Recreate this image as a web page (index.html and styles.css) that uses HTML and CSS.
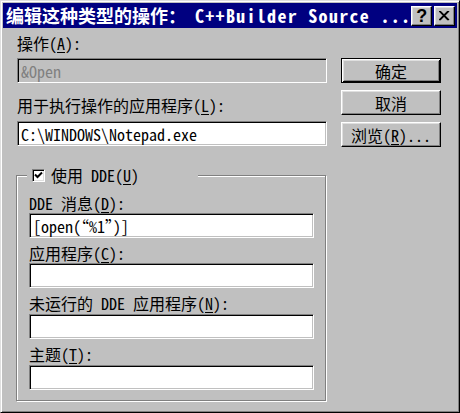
FILE: index.html
```html
<!DOCTYPE html>
<html lang="zh-CN">
<head>
<meta charset="utf-8">
<title>编辑这种类型的操作</title>
<link rel="stylesheet" href="styles.css">
</head>
<body>
<div class="window">
  <div class="titlebar">
    <span class="title">编辑这种类型的操作： <span class="title-en">C++Builder Source ...</span></span>
    <div class="tbtns">
      <span class="tbtn help">?</span>
      <span class="tbtn close"><svg width="11" height="10" viewBox="0 0 11 10"><path d="M1 0 L10 9 M0 0 L9 9 M10 0 L1 9 M9 0 L0 9" stroke="#000" stroke-width="1.2" fill="none"/></svg></span>
    </div>
  </div>
  <div class="content">
    <div class="left">
      <div class="label l1">操作(<u>A</u>):</div>
      <div class="field disabled">&amp;Open</div>
      <div class="label l2">用于执行操作的应用程序(<u>L</u>):</div>
      <div class="field">C:\WINDOWS\Notepad.exe</div>
      <div class="group">
        <div class="legend">
          <span class="checkbox"><svg width="9" height="9" viewBox="0 0 9 9"><path d="M1 3.5 L3.5 6 L8 1.5" stroke="#000" stroke-width="2" fill="none"/></svg></span>
          <span>使用 DDE(<u>U</u>)</span>
        </div>
        <div class="label g1">DDE 消息(<u>D</u>):</div>
        <div class="field gf">[open(“%1”)]</div>
        <div class="label g2">应用程序(<u>C</u>):</div>
        <div class="field gf"></div>
        <div class="label g3">未运行的 DDE 应用程序(<u>N</u>):</div>
        <div class="field gf g3f"></div>
        <div class="label g4">主题(<u>T</u>):</div>
        <div class="field gf g3f"></div>
      </div>
    </div>
    <div class="right">
      <div class="btn default">确定</div>
      <div class="btn">取消</div>
      <div class="btn">浏览(<u>R</u>)...</div>
    </div>
  </div>
</div>
</body>
</html>
```
FILE: styles.css
```css
* { box-sizing: border-box; }
html, body { margin: 0; padding: 0; }
body {
  width: 460px;
  height: 413px;
  overflow: hidden;
  background: #c0c0c0;
  font-family: "Noto Sans Mono CJK SC", "Noto Sans CJK SC", "Liberation Mono", monospace;
  font-size: 16px;
  color: #000;
}
u { text-decoration: underline; text-underline-offset: 2px; }
.window {
  width: 460px;
  height: 413px;
  display: flex;
  flex-direction: column;
  background: #c0c0c0;
  border: 1px solid;
  border-color: #dfdfdf #000 #000 #dfdfdf;
  box-shadow: inset 1px 1px #fff, inset -1px -1px #808080;
  padding: 2px;
}
.titlebar {
  height: 25px;
  flex: none;
  background: #000080;
  color: #fff;
  display: flex;
  align-items: center;
  justify-content: space-between;
  padding: 0 2px 0 3px;
}
.title {
  font-weight: bold;
  font-size: 18px;
  line-height: 25px;
  white-space: pre;
}
.title-en { letter-spacing: 1.3px; }
.tbtns { display: flex; gap: 2px; }
.tbtn {
  width: 21px;
  height: 20px;
  background: #c0c0c0;
  border: 1px solid;
  border-color: #fff #000 #000 #fff;
  box-shadow: inset -1px -1px #808080, inset 1px 1px #dfdfdf;
  display: flex;
  align-items: center;
  justify-content: center;
  color: #000;
}
.help {
  font-family: "Liberation Sans", sans-serif;
  font-weight: bold;
  font-size: 18px;
  line-height: 1;
}
.content {
  display: flex;
  gap: 14px;
  padding: 7px 15px 0 14px;
}
.left {
  width: 310px;
  display: flex;
  flex-direction: column;
}
.label {
  height: 16px;
  line-height: 16px;
  white-space: nowrap;
}
.field {
  height: 25px;
  background: #fff;
  border: 1px solid;
  border-color: #808080 #fff #fff #808080;
  box-shadow: inset 1px 1px #000, inset -1px -1px #c0c0c0;
  padding: 0 3px;
  display: flex;
  align-items: center;
  white-space: nowrap;
}
.field.disabled {
  background: #c0c0c0;
  color: #808080;
}
.l1 { margin-top: 0; }
.l1 + .field { margin-top: 7px; }
.l2 { margin-top: 14px; }
.l2 + .field { margin-top: 8px; }
.group {
  margin-top: 29px;
  margin-left: -1px;
  width: 310px;
  border: 1px solid #808080;
  box-shadow: inset 1px 1px #fff, 1px 1px #fff;
  padding: 0 11px 10px 12px;
  display: flex;
  flex-direction: column;
}
.legend {
  margin-top: -9px;
  margin-left: -2px;
  width: 171px;
  height: 16px;
  background: #c0c0c0;
  display: flex;
  align-items: center;
  gap: 6px;
  padding-left: 5px;
  line-height: 16px;
}
.checkbox {
  width: 13px;
  height: 13px;
  flex: none;
  background: #fff;
  border: 1px solid;
  border-color: #808080 #fff #fff #808080;
  box-shadow: inset 1px 1px #000, inset -1px -1px #dfdfdf;
  display: flex;
  align-items: center;
  justify-content: center;
}
.g1 { margin-top: 12px; }
.g2, .g3, .g4 { margin-top: 7px; }
.gf { margin-top: 2px; }
.g3f { margin-top: 3px; }
.right {
  width: 100px;
  display: flex;
  flex-direction: column;
  gap: 7px;
  padding-top: 23px;
}
.btn {
  height: 25px;
  background: #c0c0c0;
  border: 1px solid;
  border-color: #fff #000 #000 #fff;
  box-shadow: inset -1px -1px #808080, inset 1px 1px #dfdfdf;
  display: flex;
  align-items: center;
  justify-content: center;
  white-space: nowrap;
}
.btn.default {
  border-color: #000;
  box-shadow: inset 1px 1px #fff, inset -1px -1px #000, inset 2px 2px #dfdfdf, inset -2px -2px #808080;
}
```
